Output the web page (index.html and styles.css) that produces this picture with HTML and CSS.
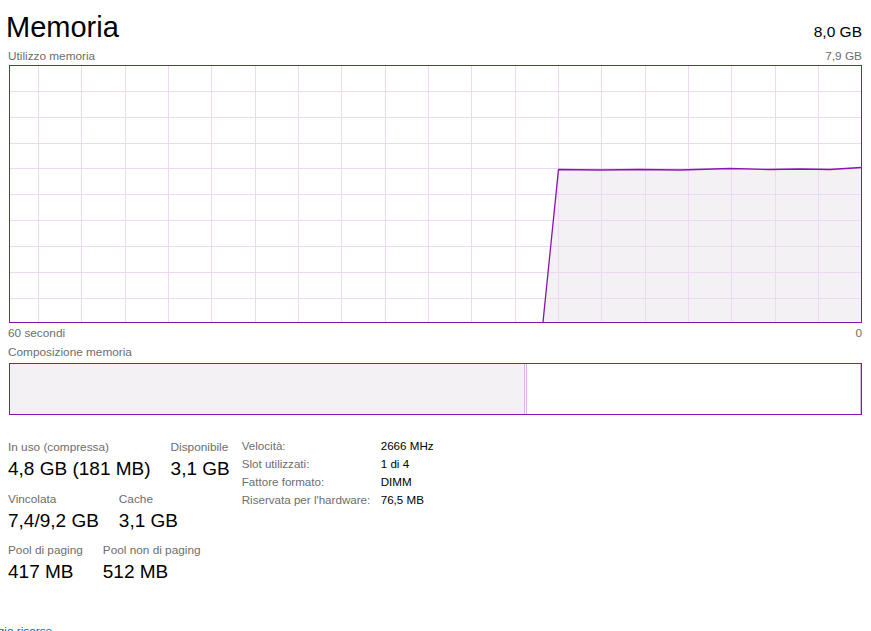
FILE: index.html
```html
<!DOCTYPE html>
<html lang="it">
<head>
<meta charset="utf-8">
<title>Memoria</title>
<link rel="stylesheet" href="styles.css">
</head>
<body>
<div class="page">
  <header class="head">
    <h1 class="title">Memoria</h1>
    <span class="total">8,0 GB</span>
  </header>
  <div class="axis axis-top"><span>Utilizzo memoria</span><span>7,9 GB</span></div>
  <div class="graph">
    <svg class="chart" width="851" height="256" viewBox="0 0 851 256">
      <path class="area" d="M533,256 L548.5,103.5 L590,104 L630,103.5 L670,104 L720,102.5 L760,103.5 L790,103 L820,103.5 L851,101.5 L851,256 Z"/>
      <g class="grid">
        <path d="M28.5,0V256M71.5,0V256M115.5,0V256M158.5,0V256M201.5,0V256M245.5,0V256M288.5,0V256M331.5,0V256M375.5,0V256M418.5,0V256M461.5,0V256M505.5,0V256M548.5,0V256M591.5,0V256M635.5,0V256M678.5,0V256M721.5,0V256M765.5,0V256M808.5,0V256"/>
        <path d="M0,25.5H851M0,51.5H851M0,77.5H851M0,102.5H851M0,128.5H851M0,154.5H851M0,180.5H851M0,206.5H851M0,232.5H851"/>
      </g>
      <path class="line" d="M533,256 L548.5,103.5 L590,104 L630,103.5 L670,104 L720,102.5 L760,103.5 L790,103 L820,103.5 L851,101.5"/>
    </svg>
  </div>
  <div class="axis axis-bottom"><span>60 secondi</span><span>0</span></div>
  <div class="axis axis-comp"><span>Composizione memoria</span></div>
  <div class="comp">
    <div class="seg seg-used"></div>
    <div class="seg seg-mod"></div>
    <div class="seg seg-standby"></div>
    <div class="seg seg-free"></div>
  </div>
  <section class="stats">
    <div class="blocks">
      <div class="row">
        <div class="stat"><div class="lbl">In uso (compressa)</div><div class="val">4,8 GB (181 MB)</div></div>
        <div class="stat"><div class="lbl">Disponibile</div><div class="val">3,1 GB</div></div>
      </div>
      <div class="row">
        <div class="stat"><div class="lbl">Vincolata</div><div class="val">7,4/9,2 GB</div></div>
        <div class="stat"><div class="lbl">Cache</div><div class="val">3,1 GB</div></div>
      </div>
      <div class="row">
        <div class="stat"><div class="lbl">Pool di paging</div><div class="val">417 MB</div></div>
        <div class="stat"><div class="lbl">Pool non di paging</div><div class="val">512 MB</div></div>
      </div>
    </div>
    <dl class="specs">
      <dt>Velocità:</dt><dd>2666 MHz</dd>
      <dt>Slot utilizzati:</dt><dd>1 di 4</dd>
      <dt>Fattore formato:</dt><dd>DIMM</dd>
      <dt>Riservata per l'hardware:</dt><dd>76,5 MB</dd>
    </dl>
  </section>
  <div class="footer">
    <a class="link" href="#">Apri Monitoraggio risorse</a>
  </div>
</div>
</body>
</html>
```
FILE: styles.css
```css
html, body {
  margin: 0;
  padding: 0;
  background: #ffffff;
  overflow: hidden;
}
body {
  font-family: "Liberation Sans", Arial, sans-serif;
  color: #000000;
}
.page {
  width: 853px;
  padding: 0 9px;
  height: 631px;
}
.head {
  display: flex;
  justify-content: space-between;
  align-items: baseline;
  height: 34px;
  padding-top: 13px;
}
.title {
  margin: 0 0 0 -3px;
  font-size: 29px;
  font-weight: normal;
  line-height: 28px;
}
.total {
  font-size: 15.5px;
  line-height: 16px;
}
.axis {
  display: flex;
  justify-content: space-between;
  font-size: 11.8px;
  color: #6d6d6d;
  margin-left: -1px;
}
.axis-top {
  line-height: 18px;
}
.axis-bottom {
  line-height: 20px;
}
.axis-comp {
  line-height: 18px;
  margin-bottom: 2px;
}
.graph {
  border: 1px solid #8b12ae;
  height: 256px;
}
.chart {
  display: block;
}
.area {
  fill: #f3f1f4;
}
.grid path {
  stroke: #ebdaf0;
  stroke-width: 1;
  fill: none;
  shape-rendering: crispEdges;
}
.line {
  fill: none;
  stroke: #8b12ae;
  stroke-width: 1.3;
}
.comp {
  display: flex;
  border: 1px solid #8b12ae;
  height: 50px;
}
.seg-used {
  width: 514px;
  background: #f3f1f4;
}
.seg-mod {
  width: 1px;
  border-left: 1px solid #d9b6e3;
  border-right: 1px solid #d9b6e3;
}
.seg-standby {
  flex: 1;
}
.seg-free {
  width: 0;
  border-left: 1px solid #d9b6e3;
}
.stats {
  display: flex;
  margin-top: 22px;
  margin-left: -1px;
}
.blocks {
  display: flex;
  flex-direction: column;
  gap: 7.7px;
  padding-top: 2px;
}
.row {
  display: flex;
  gap: 20px;
}
.lbl {
  font-size: 11.8px;
  line-height: 16px;
  color: #6d6d6d;
}
.val {
  font-size: 19px;
  line-height: 28px;
}
.specs {
  display: grid;
  grid-template-columns: 139px auto;
  margin: 0 0 0 12px;
  font-size: 11.6px;
  line-height: 18px;
  align-content: start;
}
.specs dt {
  color: #6d6d6d;
}
.specs dd {
  margin: 0;
}
.footer {
  margin-top: 37px;
  font-size: 11.8px;
  line-height: 16px;
}
.link {
  display: inline-block;
  margin-left: -88px;
  color: #0066cc;
  text-decoration: none;
}
```
